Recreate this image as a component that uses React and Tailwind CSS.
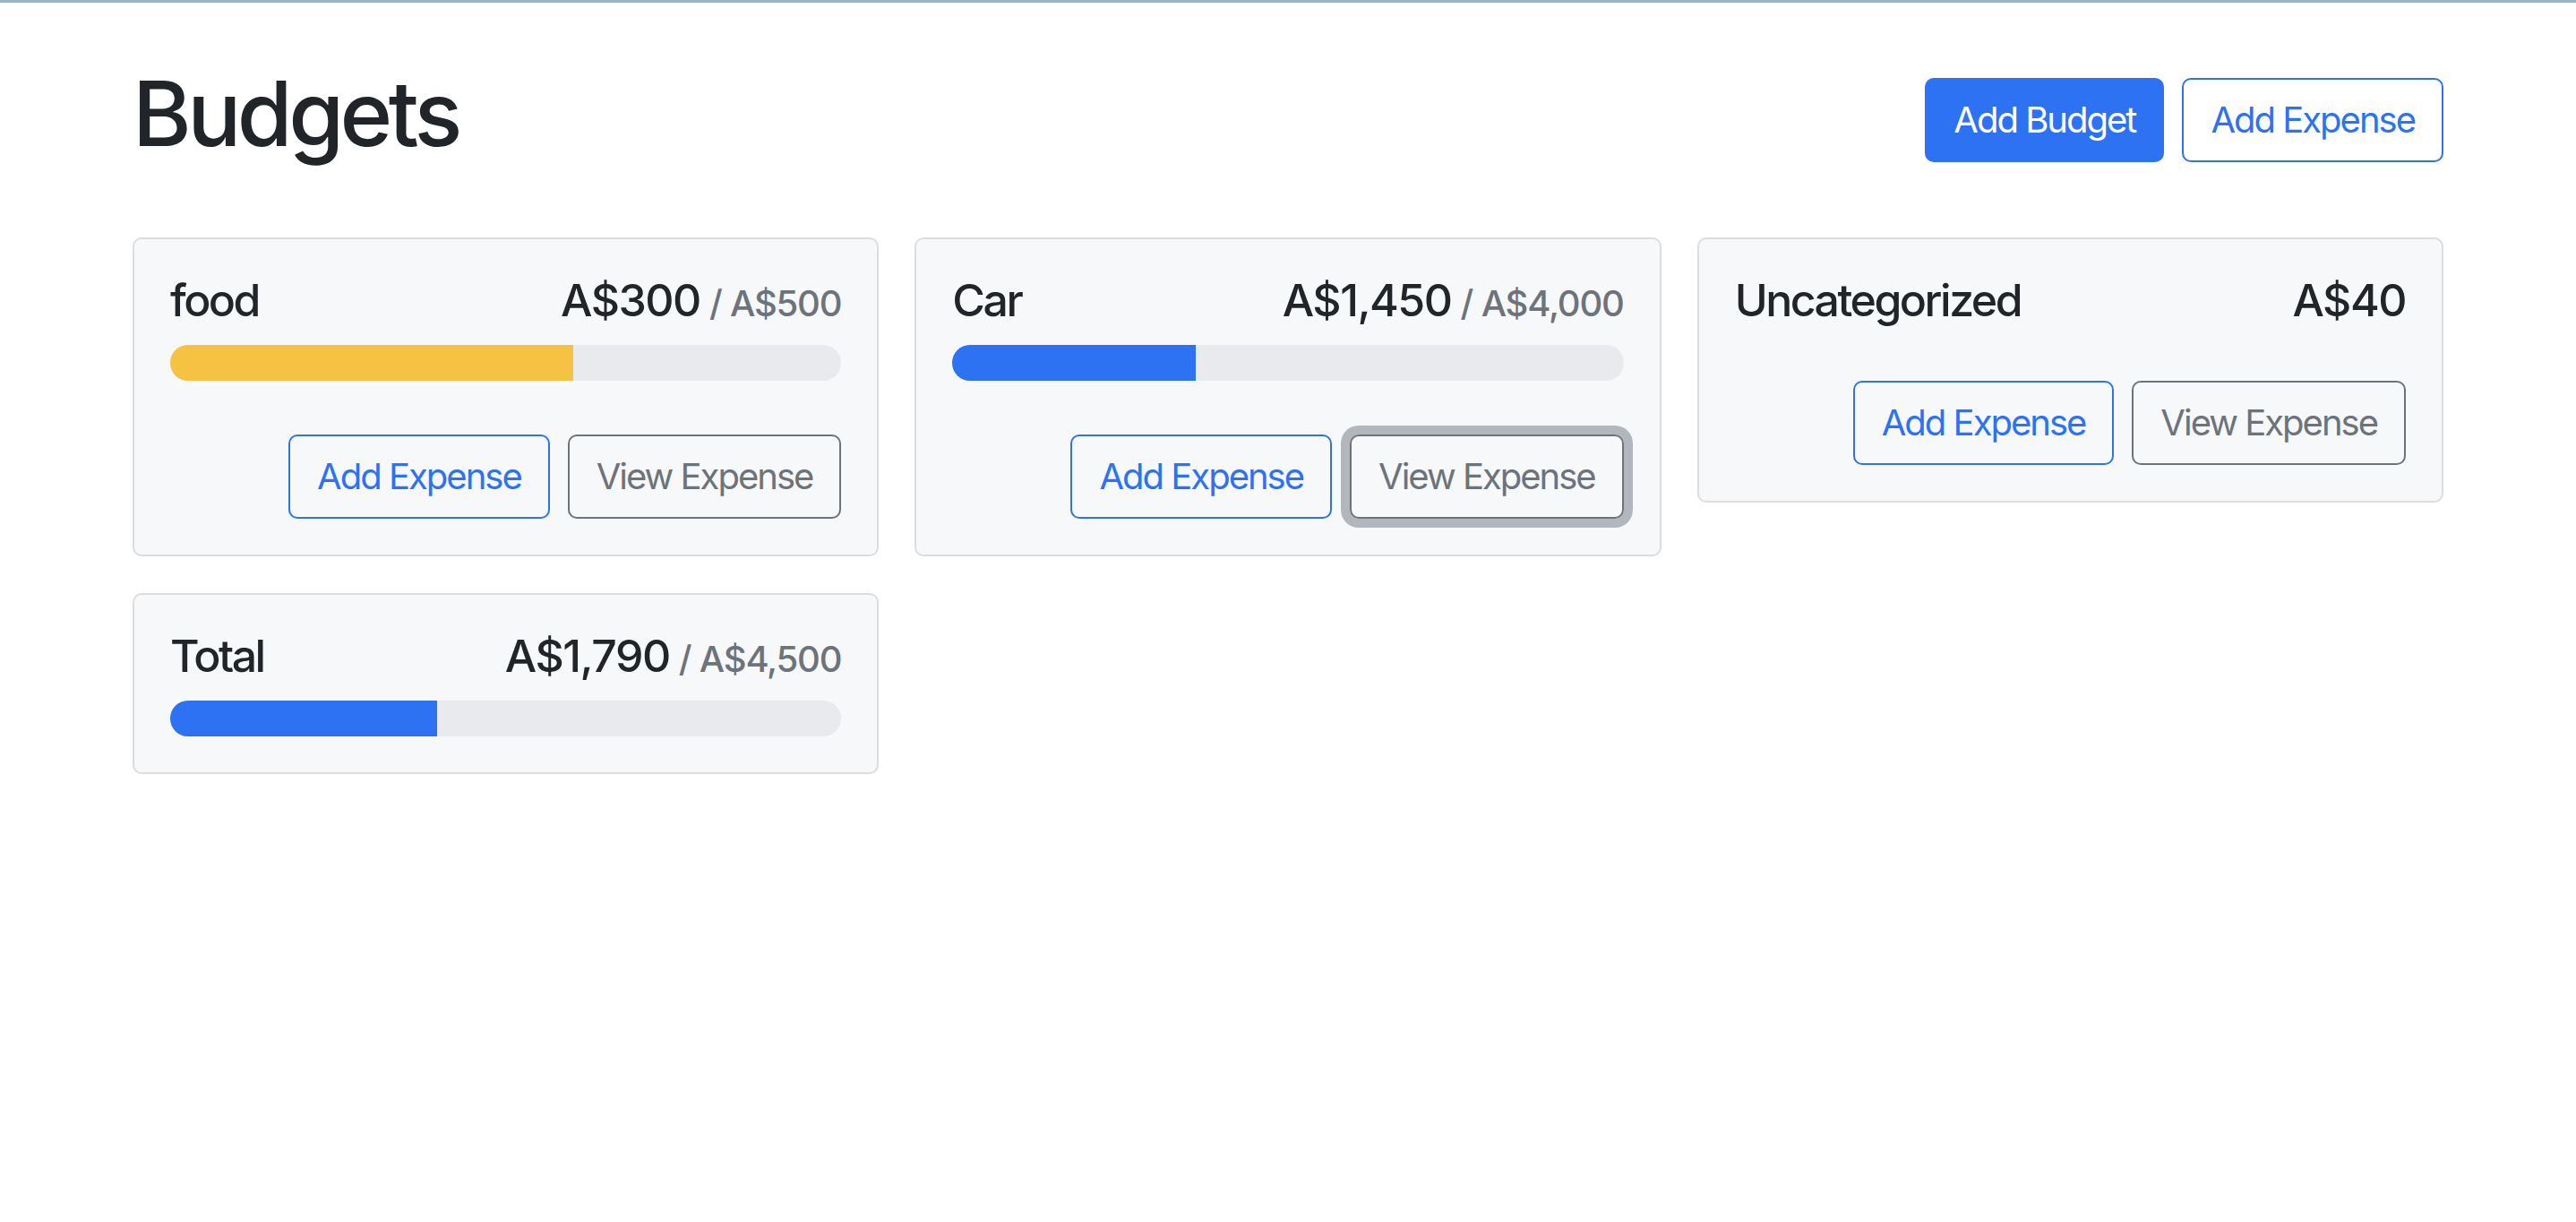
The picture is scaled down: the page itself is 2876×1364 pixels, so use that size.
import React from "react";

const budgets = [
  { name: "food", amount: 300, max: 500, color: "bg-[#f6c244]", buttons: true },
  { name: "Car", amount: 1450, max: 4000, color: "bg-[#2d72f3]", buttons: true, focusView: true },
  { name: "Uncategorized", amount: 40, buttons: true },
  { name: "Total", amount: 1790, max: 4500, color: "bg-[#2d72f3]" },
];

const fmt = (n) => "A$" + n.toLocaleString("en-US");

const btnBase =
  "rounded-[10px] border-2 px-[30px] py-[15px] text-[40px] leading-[60px] tracking-[-0.05em]";

function BudgetCard({ b }) {
  const hasMax = b.max != null;
  return (
    <div className="rounded-[10px] border-2 border-[#dcdddf] bg-[#f7f8fa] px-[40px] pt-[38px] pb-[40px]">
      <div className="flex h-[60px] items-baseline justify-between font-medium leading-[60px] text-[#212529]">
        <div className="text-[50px] tracking-[-0.05em]">{b.name}</div>
        <div className="flex items-baseline">
          <span className="text-[50px] tracking-[-0.03em]">{fmt(b.amount)}</span>
          {hasMax && (
            <span className="ml-[10px] text-[40px] leading-none tracking-[-0.03em] text-[#6c737b]">
              / {fmt(b.max)}
            </span>
          )}
        </div>
      </div>
      {hasMax && (
        <div className="mt-[20px] flex h-[40px] overflow-hidden rounded-full bg-[#e9eaed]">
          <div className={b.color} style={{ width: `${(b.amount / b.max) * 100}%` }} />
        </div>
      )}
      {b.buttons && (
        <div className="mt-[60px] flex items-center justify-end gap-[20px]">
          <button className={`${btnBase} border-[#2d72f3] text-[#2d72f3]`}>Add Expense</button>
          <button
            className={`${btnBase} border-[#6c737b] text-[#6c737b] ${
              b.focusView ? "shadow-[0_0_0_10px_rgba(108,117,125,0.5)]" : ""
            }`}
          >
            View Expense
          </button>
        </div>
      )}
    </div>
  );
}

export default function App() {
  return (
    <div
      className="min-h-[1364px] w-full bg-white"
      style={{ fontFamily: "Inter, 'Liberation Sans', sans-serif" }}
    >
      <div className="h-[3px] w-full bg-[#9db2c5]" />
      <div className="mx-auto w-[2580px] pt-[64px]">
        <div className="flex items-start">
          <h1 className="mr-auto text-[100px] font-medium leading-[120px] tracking-[-0.045em] text-[#212529]">
            Budgets
          </h1>
          <div className="mt-[20px] flex gap-[20px]">
            <button className={`${btnBase} border-[#2d72f3] bg-[#2d72f3] text-white`}>Add Budget</button>
            <button className={`${btnBase} border-[#2d72f3] bg-white text-[#2d72f3]`}>Add Expense</button>
          </div>
        </div>
        <div className="mt-[78px] grid grid-cols-3 items-start gap-x-[40px] gap-y-[41px]">
          {budgets.map((b) => (
            <BudgetCard key={b.name} b={b} />
          ))}
        </div>
      </div>
    </div>
  );
}
